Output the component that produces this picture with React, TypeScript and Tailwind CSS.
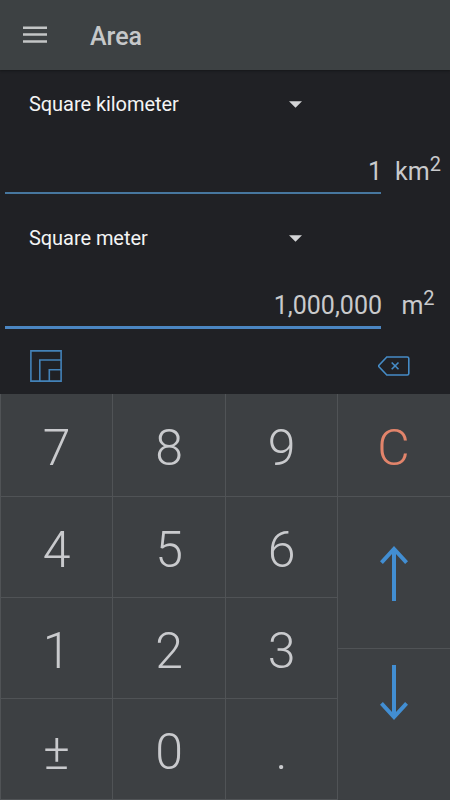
interface UnitRowProps {
  name: string;
  value: string;
  unit: string;
  active?: boolean;
}

function UnitRow({ name, value, unit, active = false }: UnitRowProps) {
  return (
    <section className="h-[134px] flex flex-col">
      <button className="mt-[22px] ml-[29px] w-[273px] h-6 flex items-center justify-between text-xl leading-6 tracking-[-0.06px] text-[#f4f4f4]">
        <span>{name}</span>
        <svg width="13" height="7" viewBox="0 0 13 7" className="fill-[#d3d4d6]">
          <path d="M0 0.3h13L6.5 6.7z" />
        </svg>
      </button>
      <div className="mt-[34px] flex text-[25px] text-[#c9cacc]">
        <div
          className={
            active
              ? 'ml-[5px] w-[376px] h-[45px] border-b-3 border-[#4b86c2] text-right leading-[44px]'
              : 'ml-[5px] w-[376px] h-[44px] border-b-2 border-[#47779f] text-right leading-[44px]'
          }
        >
          <span className="-mr-px">{value}</span>
        </div>
        <div className="flex-1 pl-[5px] flex justify-center leading-[44px]">
          <span>{unit}</span>
          <span className="text-xl leading-[28px]">2</span>
        </div>
      </div>
    </section>
  );
}

function AreaIcon() {
  return (
    <svg width="32" height="32" viewBox="0 0 32 32" fill="none" stroke="#4382b8" strokeWidth="1.6">
      <path d="M0.9 0.9h30.2v30.2H0.9zM9.8 31V10H31M19.3 31V19.8H31" />
    </svg>
  );
}

function BackspaceIcon() {
  return (
    <svg width="32" height="20" viewBox="0 0 32 20" fill="none" stroke="#458bc6" strokeWidth="1.6">
      <path d="M8.8 1H29.2Q30.8 1 30.8 2.6V17.4Q30.8 19 29.2 19H8.8L1 10.8Q0.4 10 1 9.2z" />
      <path d="M13.7 6.5l6.8 6.8M20.5 6.5l-6.8 6.8" />
    </svg>
  );
}

function ArrowIcon({ down = false }: { down?: boolean }) {
  return (
    <svg
      width="28"
      height="55"
      viewBox="0 0 28 55"
      fill="none"
      stroke="#428ed2"
      strokeWidth="4"
      className={down ? 'rotate-180' : ''}
    >
      <path d="M14 55V3M1.4 16.6L14 3L26.6 16.6" />
    </svg>
  );
}

const keys = ['7', '8', '9', '4', '5', '6', '1', '2', '3', '±', '0', '.'];

export default function App() {
  return (
    <div className="w-[450px] h-[800px] flex flex-col overflow-hidden bg-[#202125] font-['Roboto',sans-serif]">
      <header className="h-[70px] shrink-0 flex items-center bg-[#3d4143] text-[#c6c8c9] shadow-[0_1px_2px_#151619]">
        <button className="ml-[23px]">
          <svg width="24" height="18" viewBox="0 0 24 18" fill="#c3c5c6">
            <path d="M0 0.4h24v2.5H0zM0 7.3h24v2.5H0zM0 14.2h24v2.5H0z" />
          </svg>
        </button>
        <h1 className="ml-[43px] pt-[3px] text-[25px] leading-8 font-medium">Area</h1>
      </header>

      <main className="h-[324px] shrink-0 flex flex-col">
        <UnitRow name="Square kilometer" value="1" unit="km" />
        <UnitRow name="Square meter" value="1,000,000" unit="m" active />
        <div className="h-14 pt-[12px] pl-[30px] pr-10 flex items-start justify-between">
          <AreaIcon />
          <div className="pt-[6px]">
            <BackspaceIcon />
          </div>
        </div>
      </main>

      <div className="flex h-[406px] shrink-0 bg-[#3d4043]">
        <div className="grid grid-cols-[112px_113px_112px] grid-rows-[103px_101px_101px_101px] text-[50px] font-light text-[#c9cacd]">
          {keys.map((key) => (
            <button
              key={key}
              className="flex items-center justify-center border-l border-b border-[#505356] pt-[6px]"
            >
              {key}
            </button>
          ))}
        </div>
        <div className="grid w-[113px] grid-rows-[103px_152px_151px] text-[50px] font-light">
          <button className="flex items-center justify-center border-l border-b border-[#505356] pt-[6px] pr-px text-[#e2846b]">
            C
          </button>
          <button className="flex items-center justify-center border-l border-b border-[#505356] pt-[2px]">
            <ArrowIcon />
          </button>
          <button className="flex items-start justify-center border-l border-[#505356] pt-4">
            <ArrowIcon down />
          </button>
        </div>
      </div>
    </div>
  );
}
